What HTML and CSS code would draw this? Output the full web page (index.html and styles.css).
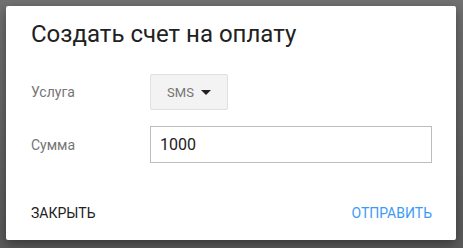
FILE: index.html
```html
<!DOCTYPE html>
<html lang="ru">
<head>
    <meta charset="UTF-8">
    <title>Создать счет на оплату</title>
    <link rel="stylesheet" href="styles.css">
</head>
<body>
    <div class="overlay">
        <div class="dialog">
            <h1 class="dialog-title">Создать счет на оплату</h1>
            <div class="dialog-body">
                <div class="field-row">
                    <span class="field-label">Услуга</span>
                    <button class="select-btn">SMS <span class="caret"></span></button>
                </div>
                <div class="field-row">
                    <span class="field-label">Сумма</span>
                    <input class="field-input" type="text" value="1000">
                </div>
            </div>
            <div class="dialog-actions">
                <button class="action-btn">Закрыть</button>
                <button class="action-btn primary">Отправить</button>
            </div>
        </div>
    </div>
</body>
</html>
```
FILE: styles.css
```css
* {
    margin: 0;
    padding: 0;
    box-sizing: border-box;
}

body {
    font-family: Roboto, "Liberation Sans", sans-serif;
    background-color: #6b6b6b;
}

.overlay {
    width: 463px;
    height: 248px;
    padding: 6px 7px 8px 6px;
    background: linear-gradient(#717171, #5a5a5a);
}

.dialog {
    background-color: #fff;
    width: 450px;
    height: 234px;
    border-radius: 2px;
    box-shadow: 0 4px 12px rgba(0, 0, 0, 0.4);
    display: flex;
    flex-direction: column;
    padding: 0 24px 0 25px;
}

.dialog-title {
    font-size: 24px;
    font-weight: 400;
    color: #212121;
    line-height: 32px;
    padding-top: 12px;
}

.dialog-body {
    padding-top: 24px;
    display: flex;
    flex-direction: column;
    gap: 16px;
}

.field-row {
    display: flex;
    align-items: center;
}

.field-label {
    width: 119px;
    font-size: 14px;
    color: #757575;
}

.select-btn {
    width: 78px;
    height: 36px;
    background-color: #f3f3f3;
    border: 1px solid #e0e0e0;
    border-radius: 2px;
    font-family: inherit;
    font-size: 13px;
    color: #757575;
    display: flex;
    align-items: center;
    justify-content: center;
    gap: 7px;
}

.caret {
    width: 0;
    height: 0;
    border-left: 5px solid transparent;
    border-right: 5px solid transparent;
    border-top: 5px solid #212121;
}

.field-input {
    width: 282px;
    height: 37px;
    border: 1px solid #bdbdbd;
    padding: 0 9px;
    font-family: inherit;
    font-size: 16px;
    color: #212121;
    outline: none;
}

.dialog-actions {
    margin-top: auto;
    height: 56px;
    display: flex;
    justify-content: space-between;
    align-items: center;
    padding-top: 2px;
}

.action-btn {
    background: none;
    border: none;
    font-family: inherit;
    font-size: 14px;
    text-transform: uppercase;
    color: #212121;
}

.action-btn.primary {
    color: #3d9bf5;
}
```
